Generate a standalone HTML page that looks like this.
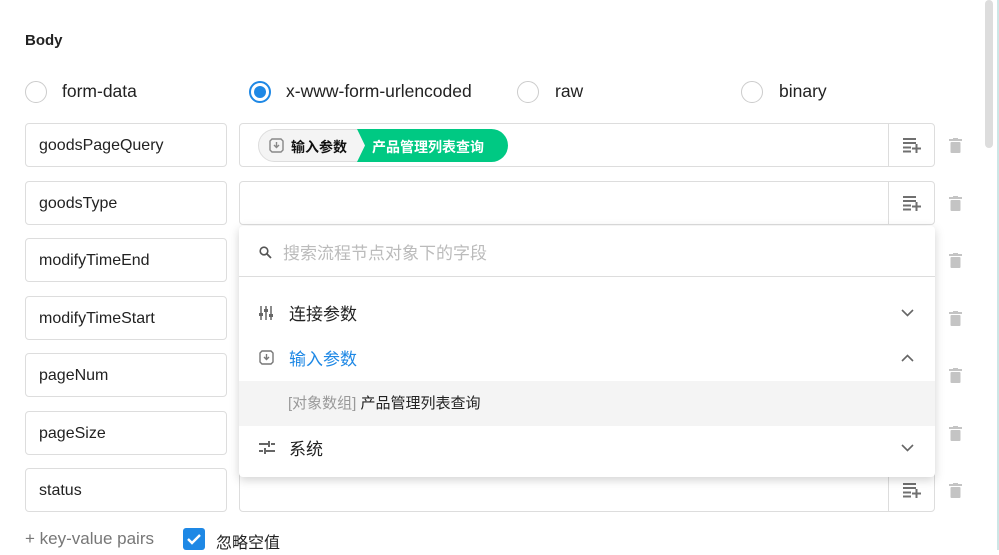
<!DOCTYPE html>
<html><head><meta charset="utf-8"><style>
*{box-sizing:border-box;margin:0;padding:0}
body{width:999px;height:550px;overflow:hidden;background:#fff;font-family:"Liberation Sans","Noto Sans CJK SC",sans-serif;position:relative;color:#222}
.a{position:absolute}
.title{left:25px;top:32px;font-size:15px;font-weight:bold}
.radio{width:22px;height:22px;border:1px solid #ccc;border-radius:50%;top:81px}
.radio.on{border:2px solid #1e88e5}
.radio.on::after{content:"";position:absolute;left:3px;top:3px;width:12px;height:12px;border-radius:50%;background:#1e88e5}
.rl{top:81px;font-size:17.5px;color:#222}
.key{left:25px;width:202px;height:44px;border:1px solid #ddd;border-radius:4px;font-size:16px;padding:13px 13px;color:#222}
.val{left:239px;width:696px;height:44px;border:1px solid #ddd;border-radius:4px}
.btn{position:absolute;right:0;top:0;width:46px;height:42px;border-left:1px solid #ddd}
.trash{left:949px;width:13px;height:15px}
.dd{left:239px;top:226px;width:696px;height:251px;background:#fff;border-radius:4px;box-shadow:0 3px 10px rgba(0,0,0,.18)}
.it{position:absolute;left:0;width:100%;height:45px;font-size:17px}
</style></head><body>
<div class="a title">Body</div>
<div class="a radio" style="left:25px"></div><div class="a rl" style="left:62px">form-data</div>
<div class="a radio on" style="left:249px"></div><div class="a rl" style="left:286px">x-www-form-urlencoded</div>
<div class="a radio" style="left:517px"></div><div class="a rl" style="left:555px">raw</div>
<div class="a radio" style="left:741px"></div><div class="a rl" style="left:779px">binary</div>

<div id="rows"></div>
<script>
var keys=["goodsPageQuery","goodsType","modifyTimeEnd","modifyTimeStart","pageNum","pageSize","status"];
var ys=[123,181,238,296,353,411,468];
var h="";
var bi='<svg class="a" style="left:14px;top:14px" width="18" height="15" viewBox="0 0 18 15"><g fill="#707070"><rect x="0" y="0" width="13" height="2"/><rect x="0" y="4" width="13" height="2"/><rect x="0" y="8.5" width="8" height="2"/><rect x="0" y="12.5" width="8" height="2"/><rect x="9" y="9.5" width="9" height="2"/><rect x="12.5" y="6" width="2" height="9"/></g></svg>';
var tr='<svg width="13" height="15" viewBox="0 0 13 15"><rect x="0" y="1" width="13" height="2" fill="#c4c4c4"/><rect x="4" y="0" width="5" height="2" fill="#c4c4c4"/><rect x="1.5" y="4" width="10" height="11" rx="1" fill="#c4c4c4"/></svg>';
for(var i=0;i<7;i++){h+='<div class="a key" style="top:'+ys[i]+'px">'+keys[i]+'</div><div class="a val" style="top:'+ys[i]+'px"><div class="btn">'+bi+'</div></div><div class="a trash" style="top:'+(ys[i]+15)+'px">'+tr+'</div>';}
document.getElementById("rows").innerHTML=h;
</script>
<div class="a" style="left:258px;top:129px;height:33px;width:250px">
 <div class="a" style="left:0;top:0;width:120px;height:33px;border:1px solid #ddd;border-radius:17px 0 0 17px;background:#f4f4f4"></div>
 <svg class="a" style="left:11px;top:9px" width="15" height="15" viewBox="0 0 15 15"><path d="M3 1h9l2 2v9l-2 2H3l-2-2V3z" fill="none" stroke="#888" stroke-width="1.4"/><path d="M7.5 4v5M5 7l2.5 2.5L10 7" fill="none" stroke="#888" stroke-width="1.4"/></svg>
 <div class="a" style="left:33px;top:8px;font-size:14px;font-weight:bold;color:#111">输入参数</div>
 <div class="a" style="left:99px;top:0;width:151px;height:33px;background:#00c983;border-radius:0 17px 17px 0;clip-path:polygon(0 0,100% 0,100% 100%,0 100%,8px 50%)"></div>
 <div class="a" style="left:114px;top:8px;font-size:14px;font-weight:bold;color:#fff">产品管理列表查询</div>
</div>

<div class="a dd">
 <svg class="a" style="left:20px;top:20px" width="13" height="13" viewBox="0 0 13 13"><circle cx="5" cy="5" r="3.8" fill="none" stroke="#555" stroke-width="1.6"/><path d="M8 8l4 4" stroke="#555" stroke-width="1.8"/></svg>
 <div class="a" style="left:44px;top:13px;font-size:17px;color:#bbb">搜索流程节点对象下的字段</div>
 <div class="a" style="left:0;top:50px;width:100%;height:1px;background:#ddd"></div>
 <div class="it" style="top:65px">
  <svg class="a" style="left:20px;top:15px" width="15" height="14" viewBox="0 0 15 14"><g stroke="#666" stroke-width="1.5"><path d="M2 0v14M7 0v14M12 0v14"/></g><g fill="#666"><rect x="0" y="7" width="4" height="3"/><rect x="5" y="3" width="4" height="3"/><rect x="10" y="8" width="4" height="3"/></g></svg>
  <div class="a" style="left:50px;top:9px">连接参数</div>
  <svg class="a" style="left:662px;top:18px" width="13" height="8" viewBox="0 0 13 8"><path d="M1 1l5.5 5.5L12 1" fill="none" stroke="#666" stroke-width="1.6"/></svg>
 </div>
 <div class="it" style="top:110px">
  <svg class="a" style="left:20px;top:14px" width="15" height="15" viewBox="0 0 15 15"><path d="M3 1h9l2 2v9l-2 2H3l-2-2V3z" fill="none" stroke="#777" stroke-width="1.4"/><path d="M7.5 4v5M5 7l2.5 2.5L10 7" fill="none" stroke="#777" stroke-width="1.4"/></svg>
  <div class="a" style="left:50px;top:9px;color:#1e88e5">输入参数</div>
  <svg class="a" style="left:662px;top:18px" width="13" height="8" viewBox="0 0 13 8"><path d="M1 7l5.5-5.5L12 7" fill="none" stroke="#666" stroke-width="1.6"/></svg>
 </div>
 <div class="it" style="top:155px;background:#f4f4f4">
  <div class="a" style="left:49px;top:11px;font-size:15px"><span style="color:#999">[对象数组]</span> <span style="color:#222">产品管理列表查询</span></div>
 </div>
 <div class="it" style="top:200px">
  <svg class="a" style="left:20px;top:15px" width="16" height="13" viewBox="0 0 16 13"><g fill="#666"><rect x="0" y="2" width="9" height="2"/><rect x="12" y="2" width="4" height="2"/><rect x="9" y="0" width="2" height="6"/><rect x="0" y="9" width="4" height="2"/><rect x="7" y="9" width="9" height="2"/><rect x="5" y="7" width="2" height="6"/></g></svg>
  <div class="a" style="left:50px;top:9px">系统</div>
  <svg class="a" style="left:662px;top:18px" width="13" height="8" viewBox="0 0 13 8"><path d="M1 1l5.5 5.5L12 1" fill="none" stroke="#666" stroke-width="1.6"/></svg>
 </div>
</div>

<div class="a" style="left:25px;top:529px;font-size:17px;color:#777">+ key-value pairs</div>
<div class="a" style="left:183px;top:528px;width:22px;height:22px;background:#1e88e5;border-radius:3px"><svg width="22" height="22" viewBox="0 0 22 22"><path d="M5 11l4 4 8-8" fill="none" stroke="#fff" stroke-width="2.4"/></svg></div>
<div class="a" style="left:216px;top:529px;font-size:16px;color:#222">忽略空值</div>

<div class="a" style="left:985px;top:0;width:8px;height:148px;background:#ddd;border-radius:4px"></div>
<div class="a" style="left:997px;top:0;width:2px;height:550px;background:#cde6e6"></div>
</body></html>
